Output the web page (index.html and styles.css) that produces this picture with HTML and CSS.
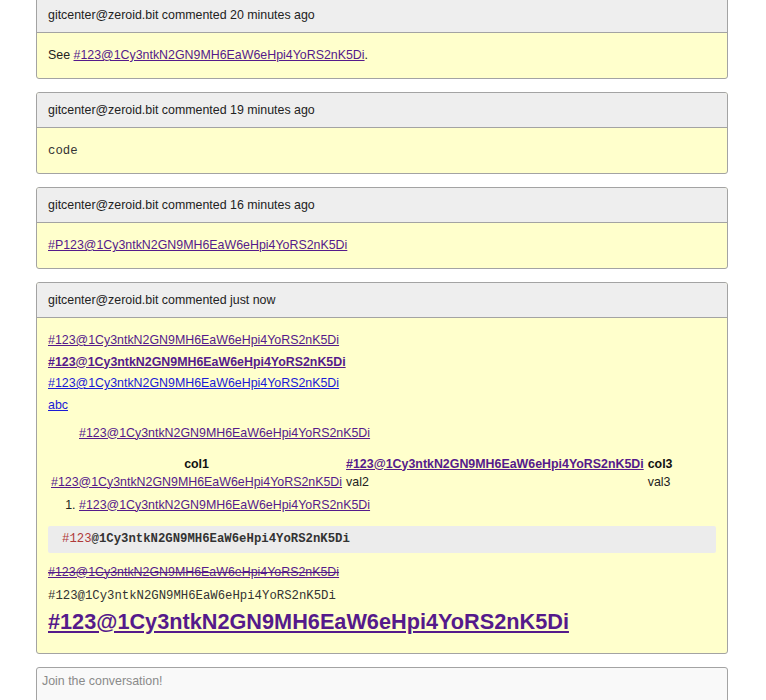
FILE: index.html
```html
<!DOCTYPE html>
<html lang="en">
<head>
<meta charset="utf-8">
<title>Issue comments</title>
<link rel="stylesheet" href="styles.css">
</head>
<body>
<div class="thread">
  <div class="comment">
    <div class="comment-head">gitcenter@zeroid.bit commented 20 minutes ago</div>
    <div class="comment-body">
      <p>See <a class="link-visited" href="#c1">#123@1Cy3ntkN2GN9MH6EaW6eHpi4YoRS2nK5Di</a>.</p>
    </div>
  </div>

  <div class="comment">
    <div class="comment-head">gitcenter@zeroid.bit commented 19 minutes ago</div>
    <div class="comment-body">
      <p><code class="inline-code">code</code></p>
    </div>
  </div>

  <div class="comment">
    <div class="comment-head">gitcenter@zeroid.bit commented 16 minutes ago</div>
    <div class="comment-body">
      <p><a class="link-visited" href="#c3">#P123@1Cy3ntkN2GN9MH6EaW6eHpi4YoRS2nK5Di</a></p>
    </div>
  </div>

  <div class="comment">
    <div class="comment-head">gitcenter@zeroid.bit commented just now</div>
    <div class="comment-body">
      <p class="ref-line"><a class="link-visited" href="#c4">#123@1Cy3ntkN2GN9MH6EaW6eHpi4YoRS2nK5Di</a></p>
      <p class="ref-line"><a class="link-visited link-bold" href="#c4">#123@1Cy3ntkN2GN9MH6EaW6eHpi4YoRS2nK5Di</a></p>
      <p class="ref-line"><a class="link-new" href="#c4">#123@1Cy3ntkN2GN9MH6EaW6eHpi4YoRS2nK5Di</a></p>
      <p class="ref-line"><a class="link-new" href="#c4">abc</a></p>
      <blockquote class="quote"><a class="link-visited" href="#c4">#123@1Cy3ntkN2GN9MH6EaW6eHpi4YoRS2nK5Di</a></blockquote>
      <table class="md-table">
        <thead>
          <tr>
            <th>col1</th>
            <th><a class="link-visited" href="#c4">#123@1Cy3ntkN2GN9MH6EaW6eHpi4YoRS2nK5Di</a></th>
            <th>col3</th>
          </tr>
        </thead>
        <tbody>
          <tr>
            <td><a class="link-visited" href="#c4">#123@1Cy3ntkN2GN9MH6EaW6eHpi4YoRS2nK5Di</a></td>
            <td>val2</td>
            <td>val3</td>
          </tr>
        </tbody>
      </table>
      <ol class="md-list">
        <li><a class="link-visited" href="#c4">#123@1Cy3ntkN2GN9MH6EaW6eHpi4YoRS2nK5Di</a></li>
      </ol>
      <pre class="code-block"><span class="hl-num">#123</span>@1Cy3ntkN2GN9MH6EaW6eHpi4YoRS2nK5Di</pre>
      <p class="strike-line"><del><a class="link-visited" href="#c4">#123@1Cy3ntkN2GN9MH6EaW6eHpi4YoRS2nK5Di</a></del></p>
      <p class="mono-line"><code class="inline-code">#123@1Cy3ntkN2GN9MH6EaW6eHpi4YoRS2nK5Di</code></p>
      <h1 class="big-link"><a class="link-visited" href="#c4">#123@1Cy3ntkN2GN9MH6EaW6eHpi4YoRS2nK5Di</a></h1>
    </div>
  </div>

  <textarea class="reply" placeholder="Join the conversation!"></textarea>
</div>
</body>
</html>
```

FILE: styles.css
```css
html, body {
  margin: 0;
  padding: 0;
  background: #ffffff;
}

body {
  font-family: "Liberation Sans", Arial, sans-serif;
  font-size: 12.4px;
  color: #222222;
}

.thread {
  width: 692px;
  margin: -3px 0 0 36px;
}

.comment {
  border: 1px solid #a3a3a3;
  border-radius: 3px;
  background: #ffffcc;
  margin-bottom: 13px;
  overflow: hidden;
}

.comment-head {
  background: #eeeeee;
  border-bottom: 1px solid #a3a3a3;
  padding: 10px 11px;
  height: 14px;
  line-height: 14px;
  color: #222222;
}

.comment-body {
  padding: 12px 11px;
  line-height: 21px;
}

.comment-body p {
  margin: 0;
  height: 21px;
}

.comment-body .ref-line {
  height: 21.5px;
  line-height: 21.5px;
}

.link-visited {
  color: #551a8b;
}

.link-new {
  color: #1a1ad6;
}

.link-bold {
  font-weight: bold;
}

.inline-code {
  font-family: "Liberation Mono", "Courier New", monospace;
  font-size: 12.3px;
  line-height: 1;
  color: #333333;
}

.quote {
  margin: 6.5px 0 10px 31px;
  padding: 0;
  height: 21px;
}

.md-table {
  border-spacing: 2px;
  border-collapse: separate;
  line-height: 14px;
}

.md-table th,
.md-table td {
  padding: 1px;
  height: 14px;
}

.md-table th {
  font-weight: bold;
  text-align: center;
  color: #111111;
}

.md-table td {
  text-align: left;
}

.md-list {
  margin: 3px 0 0 0;
  padding-left: 31px;
}

.code-block {
  margin: 10px 0 0 0;
  padding: 6px 14px;
  background: #ececec;
  border-radius: 2px;
  font-family: "Liberation Mono", "Courier New", monospace;
  font-size: 12.3px;
  font-weight: bold;
  line-height: 15px;
  height: 15px;
  color: #333333;
}

.hl-num {
  color: #b03a3a;
  font-weight: normal;
}

.comment-body .strike-line {
  margin-top: 9px;
}

.strike-line del {
  color: #551a8b;
}

.comment-body .mono-line {
  margin-top: 2px;
}

.big-link {
  margin: 2px 0 5px 0;
  font-size: 21.7px;
  line-height: 28px;
  height: 28px;
  font-weight: bold;
}

.reply {
  display: block;
  box-sizing: border-box;
  width: 692px;
  height: 80px;
  margin: 0;
  padding: 6px 5px;
  border: 1px solid #a3a3a3;
  border-radius: 3px;
  background: #f9f9f9;
  font-family: "Liberation Sans", Arial, sans-serif;
  font-size: 12.4px;
  color: #222222;
  resize: none;
}

.reply::placeholder {
  color: #8a8a8a;
}
```
